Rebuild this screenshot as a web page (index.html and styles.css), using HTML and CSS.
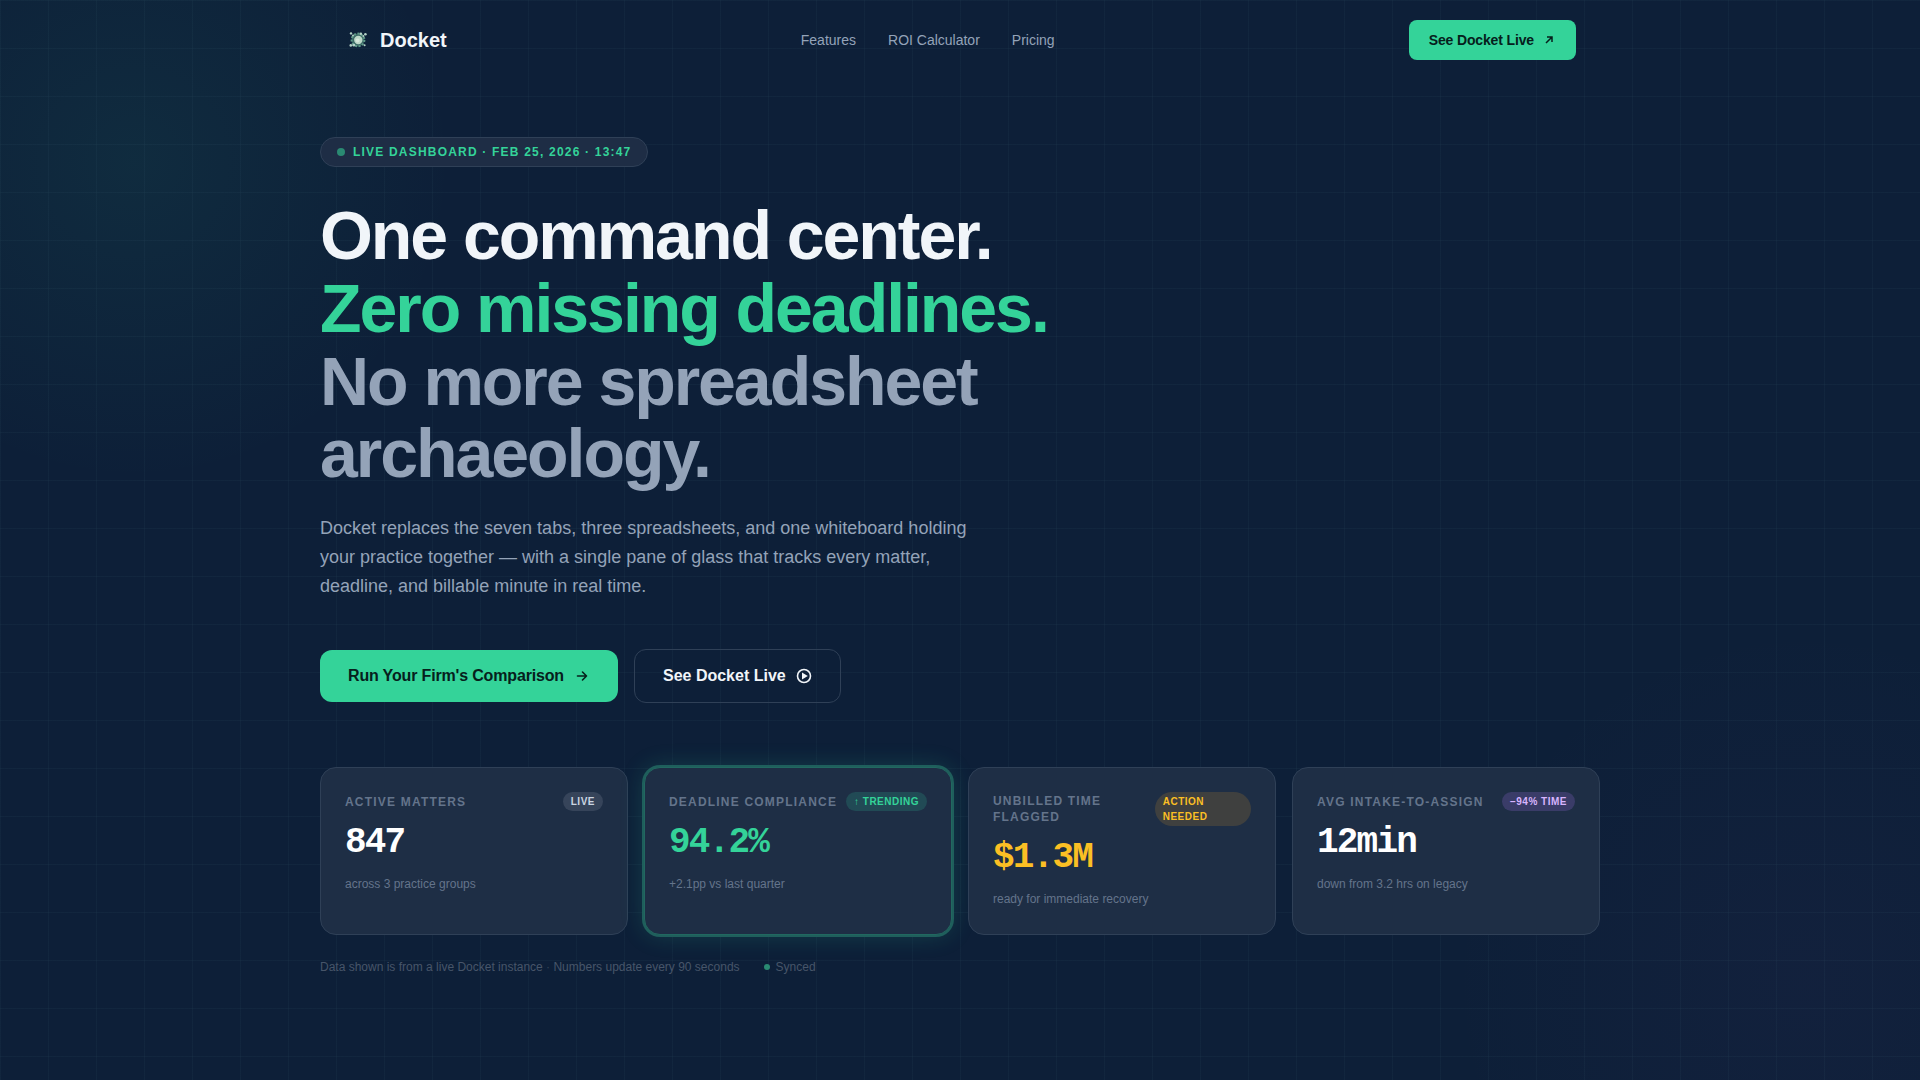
FILE: index.html
```html
<!DOCTYPE html>
<html lang="en">
<head>
  <meta charset="UTF-8">
  <meta name="viewport" content="width=device-width, initial-scale=1.0">
  <title>Docket</title>
  <link rel="stylesheet" href="styles.css">
</head>
<body>
  <!-- Navigation -->
  <header class="nav">
    <a href="#" class="logo">
      <svg class="logo-mark" viewBox="0 0 28 28" aria-hidden="true">
        <circle cx="14" cy="14" r="6.4" fill="#3c6a66" stroke="#5f9a88" stroke-width="2" stroke-dasharray="2 1.6"/>
        <circle cx="14.3" cy="14" r="4.2" fill="#bcd8c8"/>
        <circle cx="13.6" cy="14.6" r="2" fill="#d6e8dc"/>
        <g fill="#b4d2c6">
          <circle cx="7" cy="7.4" r="1.2"/>
          <circle cx="9" cy="9.6" r="1"/>
          <circle cx="16.8" cy="7.8" r="1.3"/>
          <circle cx="21.4" cy="8.2" r="1.3"/>
          <circle cx="19.4" cy="10" r="1"/>
          <circle cx="6.8" cy="19.4" r="1.3"/>
          <circle cx="9.8" cy="19.2" r="1.4"/>
          <circle cx="20.6" cy="19.2" r="1"/>
        </g>
      </svg>
      <span>Docket</span>
    </a>
    <nav class="nav-links">
      <a href="#features">Features</a>
      <a href="#roi">ROI Calculator</a>
      <a href="#pricing">Pricing</a>
    </nav>
    <a href="#live" class="btn btn-small">
      See Docket Live
      <svg width="14" height="14" viewBox="0 0 14 14" fill="none" stroke="currentColor" stroke-width="1.5" aria-hidden="true"><path d="M4 10l6-6M5 4h5v5"/></svg>
    </a>
  </header>

  <!-- Hero -->
  <main class="hero">
    <div class="live-badge"><span class="dot"></span>Live Dashboard · Feb 25, 2026 · 13:47</div>

    <h1 class="headline">
      One command center.<br>
      <span class="accent">Zero missing deadlines.</span><br>
      <span class="muted">No more spreadsheet archaeology.</span>
    </h1>

    <p class="lead">Docket replaces the seven tabs, three spreadsheets, and one whiteboard holding your practice together — with a single pane of glass that tracks every matter, deadline, and billable minute in real time.</p>

    <div class="actions">
      <a href="#roi" class="btn btn-primary">
        Run Your Firm's Comparison
        <svg width="16" height="16" viewBox="0 0 16 16" fill="none" stroke="currentColor" stroke-width="1.6" stroke-linecap="round" stroke-linejoin="round" aria-hidden="true"><path d="M3.5 8h9M8.5 4l4 4-4 4"/></svg>
      </a>
      <a href="#live" class="btn btn-outline">
        See Docket Live
        <svg width="16" height="16" viewBox="0 0 16 16" aria-hidden="true"><circle cx="8" cy="8" r="6.5" fill="none" stroke="currentColor" stroke-width="1.6"/><path d="M6 4.4L11.8 8 6 11.6z" fill="currentColor"/></svg>
      </a>
    </div>

    <!-- Metric cards -->
    <section class="metrics">
      <article class="card">
        <div class="card-head">
          <h2 class="card-label">Active Matters</h2>
          <span class="tag">Live</span>
        </div>
        <div class="card-value">847</div>
        <p class="card-note">across 3 practice groups</p>
      </article>
      <article class="card card-active">
        <div class="card-head">
          <h2 class="card-label">Deadline Compliance</h2>
          <span class="tag tag-green">↑ Trending</span>
        </div>
        <div class="card-value green">94.2%</div>
        <p class="card-note">+2.1pp vs last quarter</p>
      </article>
      <article class="card">
        <div class="card-head">
          <h2 class="card-label">Unbilled Time Flagged</h2>
          <span class="tag tag-amber">Action Needed</span>
        </div>
        <div class="card-value amber">$1.3M</div>
        <p class="card-note">ready for immediate recovery</p>
      </article>
      <article class="card">
        <div class="card-head">
          <h2 class="card-label">Avg Intake-to-Assign</h2>
          <span class="tag tag-violet">−94% Time</span>
        </div>
        <div class="card-value">12min</div>
        <p class="card-note">down from 3.2 hrs on legacy</p>
      </article>
    </section>

    <div class="data-note">
      <span>Data shown is from a live Docket instance <span class="sep">·</span> Numbers update every 90 seconds</span>
      <span class="sync"><span class="dot dot-small"></span>Synced</span>
    </div>
  </main>
</body>
</html>
```
FILE: styles.css
```css
* {
  box-sizing: border-box;
}

body {
  margin: 0;
  min-height: 100vh;
  background-color: #0d1f38;
  background-image:
    linear-gradient(rgba(148, 200, 200, 0.04) 1px, transparent 1px),
    linear-gradient(90deg, rgba(148, 200, 200, 0.04) 1px, transparent 1px),
    radial-gradient(circle 320px at 7% 15%, rgba(52, 211, 153, 0.07), transparent),
    radial-gradient(circle 360px at 94% 91%, rgba(150, 80, 180, 0.04), transparent);
  background-size: 48px 48px, 48px 48px, auto, auto;
  color: #f1f5f9;
  font-family: "Liberation Sans", Arial, sans-serif;
}

a {
  color: inherit;
  text-decoration: none;
}

/* Navigation */
.nav {
  display: flex;
  align-items: center;
  justify-content: space-between;
  max-width: 1280px;
  height: 80px;
  margin: 0 auto;
  padding: 0 24px;
}

.logo {
  display: flex;
  align-items: center;
  gap: 8px;
  font-size: 20px;
  font-weight: 700;
}

.logo-mark {
  width: 28px;
  height: 28px;
}

.nav-links {
  display: flex;
  gap: 32px;
  color: #94a3b8;
  font-size: 14px;
}

/* Buttons */
.btn {
  display: inline-flex;
  align-items: center;
  font-weight: 700;
}

.btn-small {
  gap: 8px;
  height: 40px;
  padding: 0 20px;
  border-radius: 8px;
  background: #34d399;
  color: #06201c;
  font-size: 14px;
  letter-spacing: -0.01em;
}

.btn-primary,
.btn-outline {
  gap: 10px;
  padding: 16px 28px;
  border-radius: 12px;
  font-size: 16px;
  line-height: 20px;
}

.btn-primary {
  background: #34d399;
  color: #06201c;
  letter-spacing: -0.01em;
}

.btn-outline {
  border: 1px solid #2f4057;
}

/* Hero */
.hero {
  max-width: 1280px;
  margin: 0 auto;
  padding: 57px 0 96px;
}

.live-badge {
  display: flex;
  align-items: center;
  gap: 8px;
  width: fit-content;
  padding: 7px 16px;
  border: 1px solid #2f4057;
  border-radius: 15px;
  background: #1e2d45;
  color: #34d399;
  font-size: 12px;
  font-weight: 700;
  line-height: 14px;
  letter-spacing: 0.1em;
  text-transform: uppercase;
}

.dot {
  width: 8px;
  height: 8px;
  border-radius: 50%;
  background: #2a8a72;
}

.dot-small {
  width: 6px;
  height: 6px;
}

.headline {
  max-width: 800px;
  margin: 32px 0 24px;
  font-size: 68px;
  line-height: 1.07;
  letter-spacing: -0.03em;
}

.accent {
  color: #34d399;
}

.muted {
  color: #94a3b8;
}

.lead {
  max-width: 660px;
  margin: 0 0 48px;
  color: #94a3b8;
  font-size: 18px;
  line-height: 29px;
}

.actions {
  display: flex;
  align-items: center;
  gap: 16px;
  margin-bottom: 64px;
}

/* Metric cards */
.metrics {
  display: grid;
  grid-template-columns: repeat(4, 1fr);
  gap: 16px;
}

.card {
  min-height: 168px;
  padding: 24px;
  border: 1px solid #2f4057;
  border-radius: 16px;
  background: #1e2e45;
}

.card-active {
  border-color: #216860;
  box-shadow: 0 0 0 2px #1f5f5c, 0 0 24px rgba(52, 211, 153, 0.2);
}

.card-head {
  display: flex;
  align-items: center;
  justify-content: space-between;
  margin-bottom: 12px;
}

.card-label {
  margin: 0;
  color: #64748b;
  font-size: 12px;
  line-height: 16px;
  letter-spacing: 0.1em;
  text-transform: uppercase;
}

.tag {
  padding: 2px 8px;
  border-radius: 17px;
  background: #36445a;
  color: #cbd5e1;
  font-size: 10px;
  font-weight: 700;
  line-height: 15px;
  letter-spacing: 0.05em;
  text-transform: uppercase;
}

.tag-green {
  background: #214a55;
  color: #34d399;
}

.tag-amber {
  background: #3f403f;
  color: #fbbf24;
}

.tag-violet {
  background: #3a3c68;
  color: #d8b4fe;
}

.card-value {
  margin-bottom: 12px;
  color: #fff;
  font-family: "Liberation Mono", monospace;
  font-size: 36px;
  font-weight: 700;
  line-height: 40px;
  letter-spacing: -0.05em;
}

.card-value.green {
  color: #34d399;
}

.card-value.amber {
  color: #fbbf24;
}

.card-note {
  margin: 0;
  color: #64748b;
  font-size: 12px;
  line-height: 18px;
}

.data-note {
  display: flex;
  gap: 24px;
  margin-top: 24px;
  color: #475569;
  font-size: 12px;
  line-height: 16px;
}

.sep {
  color: #334155;
}

.sync {
  display: flex;
  align-items: center;
  gap: 6px;
}
```
